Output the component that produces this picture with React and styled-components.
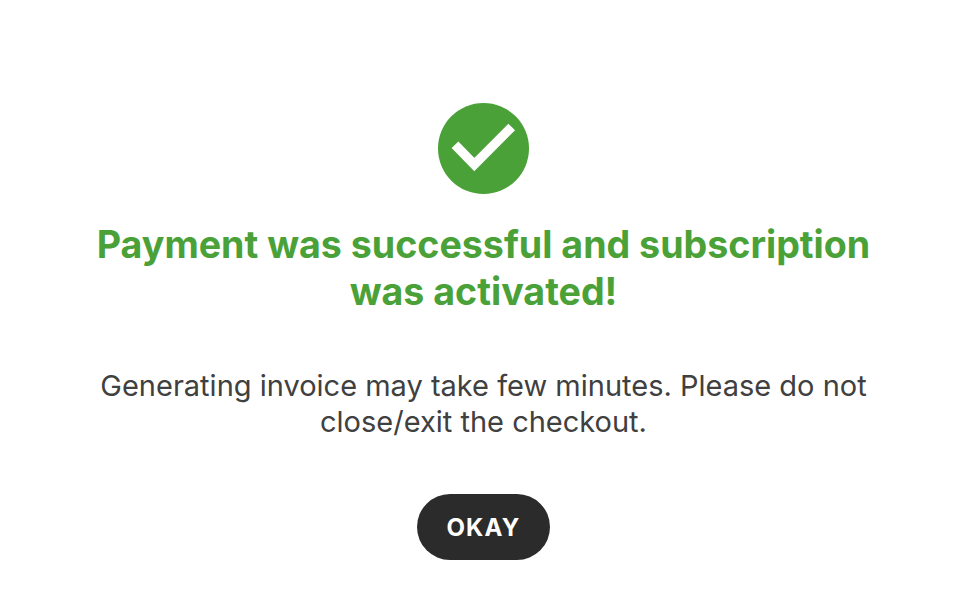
import React from 'react';
import styled, { createGlobalStyle } from 'styled-components';

const Global = createGlobalStyle`
  html, body { margin: 0; padding: 0; background: #fff; }
  body { font-family: Inter, "Liberation Sans", sans-serif; }
`;

const Page = styled.div`
  width: 967px;
  height: 606px;
  padding-top: 103px;
  box-sizing: border-box;
  display: flex;
  flex-direction: column;
  align-items: center;
  text-align: center;
`;

const Title = styled.h1`
  margin: 27px 0 0;
  width: 860px;
  font-size: 37.6px;
  line-height: 47px;
  font-weight: 650;
  color: #4aa138;
`;

const Message = styled.p`
  margin: 53px 0 0;
  width: 860px;
  font-size: 29px;
  line-height: 36px;
  font-weight: 400;
  color: #404040;
`;

const Okay = styled.button`
  margin-top: 54px;
  width: 133px;
  height: 66px;
  padding: 0;
  border: 0;
  border-radius: 33px;
  background: #2b2b2b;
  color: #fff;
  font-family: inherit;
  font-size: 24px;
  font-weight: 700;
  letter-spacing: 1.2px;
`;

function CheckIcon() {
  return (
    <svg width="91" height="91" viewBox="0 0 91 91">
      <circle cx="45.5" cy="45.5" r="45.5" fill="#4aa138" />
      <path d="M17 41.7 L36.3 61.5 L73.7 24" fill="none" stroke="#fff" strokeWidth="9.4" />
    </svg>
  );
}

export default function App() {
  return (
    <Page>
      <Global />
      <CheckIcon />
      <Title>Payment was successful and subscription<br />was activated!</Title>
      <Message>Generating invoice may take few minutes. Please do not<br />close/exit the checkout.</Message>
      <Okay>OKAY</Okay>
    </Page>
  );
}
